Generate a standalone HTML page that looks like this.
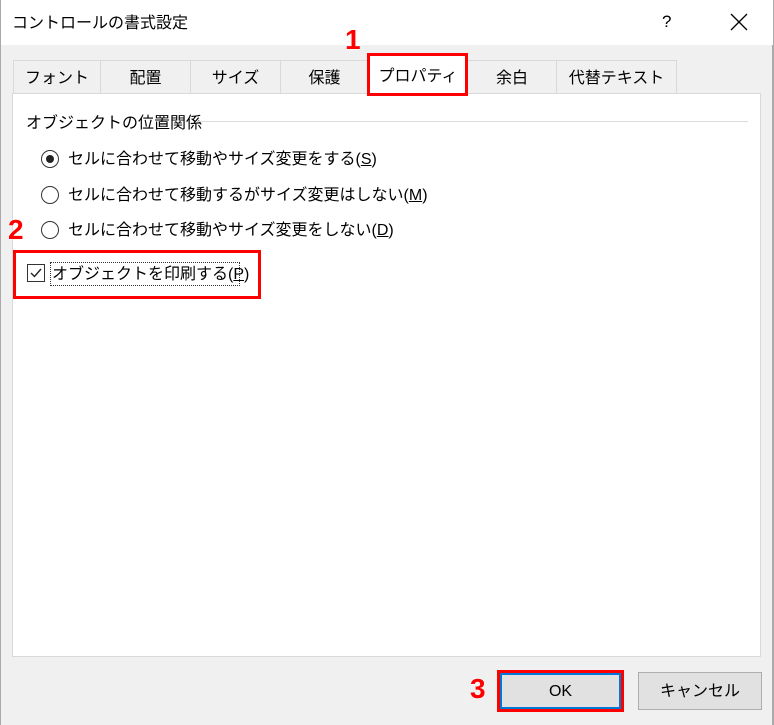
<!DOCTYPE html>
<html><head><meta charset="utf-8"><style>
*{margin:0;padding:0;box-sizing:border-box}
body{width:774px;height:725px;background:#f0f0f0;font-family:"Liberation Sans","Noto Sans CJK JP",sans-serif;color:#000;position:relative;overflow:hidden;font-size:16px}
.abs{position:absolute}
.title{left:0;top:0;width:774px;height:45px;background:#fff;border-left:1px solid #aaa;border-right:1px solid #aaa}
.tab{position:absolute;top:60px;height:34px;border:1px solid #d9d9d9;border-bottom:none;background:#f0f0f0;text-align:center;line-height:36px;font-size:16px}
.panel{left:12px;top:93px;width:749px;height:564px;background:#fff;border:1px solid #d9d9d9}
.radio{position:absolute;width:18px;height:18px;border:1px solid #333;border-radius:50%;background:#fff}
.lbl{position:absolute;font-size:16px;line-height:20px;white-space:nowrap}
.red{color:#ff0000;font-weight:bold;font-family:"Liberation Sans",sans-serif;font-size:28px;position:absolute;text-shadow:0 0 2px #fff,0 0 2px #fff}
u{text-decoration:underline}
</style></head><body>
<div class="abs title"></div>
<div class="lbl" style="left:12px;top:14px;font-size:16px">コントロールの書式設定</div>
<div class="lbl" style="left:662px;top:12px;font-size:17px">?</div>
<svg class="abs" style="left:730px;top:13px" width="18" height="18"><path d="M1 1L17 17M17 1L1 17" stroke="#000" stroke-width="1.3"/></svg>

<div class="tab" style="left:13px;width:88px">フォント</div>
<div class="tab" style="left:100px;width:91px">配置</div>
<div class="tab" style="left:190px;width:91px">サイズ</div>
<div class="tab" style="left:280px;width:89px">保護</div>
<div class="tab" style="left:556px;width:121px">代替テキスト</div>
<div class="tab" style="left:467px;width:90px">余白</div>
<div class="abs panel"></div>
<div class="tab" style="left:368px;width:100px;top:54px;height:41px;background:#fff;border:none;line-height:46px;z-index:2">プロパティ</div>
<div class="abs" style="left:367px;top:53px;width:101px;height:43px;border:3px solid #f00;z-index:3"></div>
<div class="red" style="left:345px;top:24px">1</div>

<div class="lbl" style="left:26px;top:114px">オブジェクトの位置関係</div>
<div class="abs" style="left:197px;top:121px;width:551px;height:1px;background:#dcdcdc"></div>

<div class="radio" style="left:41px;top:150px"></div>
<div class="abs" style="left:46px;top:155px;width:8px;height:8px;border-radius:50%;background:#222"></div>
<div class="lbl" style="left:68px;top:150px">セルに合わせて移動やサイズ変更をする(<u>S</u>)</div>
<div class="radio" style="left:41px;top:186px"></div>
<div class="lbl" style="left:68px;top:186px">セルに合わせて移動するがサイズ変更はしない(<u>M</u>)</div>
<div class="radio" style="left:41px;top:221px"></div>
<div class="lbl" style="left:68px;top:221px">セルに合わせて移動やサイズ変更をしない(<u>D</u>)</div>
<div class="red" style="left:8px;top:214px">2</div>

<div class="abs" style="left:27px;top:264px;width:18px;height:18px;border:1px solid #333;background:#fff"></div>
<svg class="abs" style="left:27px;top:264px" width="18" height="18"><path d="M4 9L7.5 12.5L14 5" fill="none" stroke="#222" stroke-width="1.4"/></svg>
<div class="abs" style="left:50px;top:262px;width:190px;height:24px;border:1px dotted #333"></div>
<div class="lbl" style="left:52px;top:265px">オブジェクトを印刷する(<u>P</u>)</div>
<div class="abs" style="left:13px;top:250px;width:248px;height:49px;border:3px solid #f00"></div>

<div class="abs" style="left:497px;top:670px;width:127px;height:42px;border:3px solid #f00;background:#e1e1e1"><div style="position:absolute;inset:0;border:2px solid #0078d7"></div></div>
<div class="lbl" style="left:497px;top:682px;width:127px;text-align:center">OK</div>
<div class="abs" style="left:638px;top:672px;width:124px;height:38px;border:1px solid #adadad;background:#e1e1e1"></div>
<div class="lbl" style="left:638px;top:682px;width:124px;text-align:center">キャンセル</div>
<div class="red" style="left:470px;top:673px">3</div>
<div class="abs" style="left:0;top:45px;width:1px;height:680px;background:#aaa"></div>
<div class="abs" style="left:772px;top:45px;width:2px;height:680px;background:#aaa"></div>
</body></html>
